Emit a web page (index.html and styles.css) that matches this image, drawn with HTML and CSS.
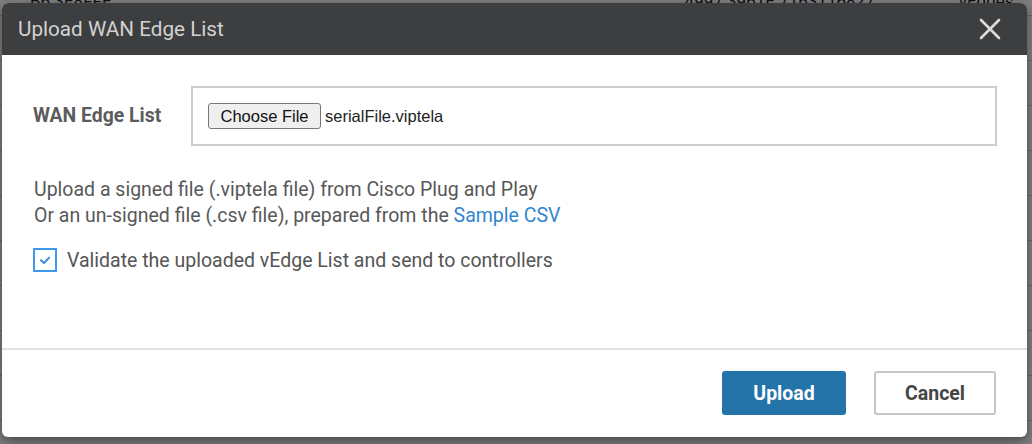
FILE: index.html
```html
<!DOCTYPE html>
<html>
<head>
<meta charset="utf-8">
<link rel="stylesheet" href="styles.css">
</head>
<body>
<div class="page">
  <div class="bg-table">
    <div class="bg-row"><span class="c1">B6 3E8FFE</span><span class="c2">4997 3961E 7163116827</span><span class="c3">vEdges</span></div>
    <div class="bg-row"></div><div class="bg-row"></div><div class="bg-row"></div><div class="bg-row"></div>
    <div class="bg-row"></div><div class="bg-row"></div><div class="bg-row"></div><div class="bg-row"></div>
    <div class="bg-row"></div>
  </div>
  <div class="backdrop"></div>
  <div class="modal">
    <div class="modal-header">
      <span class="title">Upload WAN Edge List</span>
      <svg class="close" width="22" height="22" viewBox="0 0 22 22"><path d="M2 2 L20 20 M20 2 L2 20" stroke="#dcdcdc" stroke-width="2.6" stroke-linecap="round" fill="none"/></svg>
    </div>
    <div class="modal-body">
      <div class="field-row">
        <label class="field-label">WAN Edge List</label>
        <div class="file-box">
          <span class="file-btn">Choose File</span>
          <span class="file-name">serialFile.viptela</span>
        </div>
      </div>
      <p class="desc">Upload a signed file (.viptela file) from Cisco Plug and Play<br>Or an un-signed file (.csv file), prepared from the <a class="link">Sample CSV</a></p>
      <div class="check-row">
        <span class="checkbox"><svg width="14" height="14" viewBox="0 0 14 14"><path d="M3 7.2 L6 10 L11.2 4.6" stroke="#3a8fd8" stroke-width="2" fill="none" stroke-linecap="round" stroke-linejoin="round"/></svg></span>
        <span class="check-label">Validate the uploaded vEdge List and send to controllers</span>
      </div>
    </div>
    <div class="modal-footer">
      <button class="btn btn-primary">Upload</button>
      <button class="btn btn-default">Cancel</button>
    </div>
  </div>
</div>
</body>
</html>
```

FILE: styles.css
```css
* { box-sizing: border-box; }
html, body { margin: 0; padding: 0; }
body { width: 1032px; height: 444px; overflow: hidden; font-family: Roboto, "Liberation Sans", sans-serif; }
.page { position: relative; width: 1032px; height: 444px; background: #fff; overflow: hidden; }
.bg-table { display: flex; flex-direction: column; margin-top: -29px; }
.bg-row { height: 45px; border-bottom: 1px solid #ccc; display: flex; align-items: flex-end; padding-bottom: 4px; font-size: 17px; color: #222; white-space: nowrap; }
.bg-row .c1 { margin-left: 30px; width: 716px; }
.bg-row .c2 { width: 300px; }
.bg-row .c3 { width: 80px; }
.backdrop { position: absolute; inset: 0; background: rgba(0,0,0,0.5); }
.modal { position: absolute; left: 2px; top: 3px; width: 1025px; height: 434px; background: #fff; border-radius: 6px; overflow: hidden; box-shadow: 0 4px 12px rgba(0,0,0,0.45); display: flex; flex-direction: column; }
.modal-header { height: 52px; background: #3d3e40; display: flex; align-items: center; justify-content: space-between; padding: 0 26px 0 16px; flex: none; }
.title { font-size: 20.7px; color: #d2d2d2; }
.close { display: block; }
.modal-body { flex: 1; padding: 31px 30px 0 31px; border-bottom: 2px solid #e2e2e2; }
.field-row { display: flex; align-items: center; }
.field-label { width: 158px; font-size: 19.4px; font-weight: 700; color: #5c5c5c; margin-top: -2px; }
.file-box { flex: 1; height: 60px; border: 2px solid #cdcdcd; display: flex; align-items: center; padding-left: 15px; }
.file-btn { height: 26px; width: 113px; border: 1px solid #777; border-radius: 3px; background: #efefef; font-family: "Liberation Sans", Arial, sans-serif; font-size: 16.5px; color: #111; display: flex; align-items: center; justify-content: center; }
.file-name { margin-left: 4px; font-family: "Liberation Sans", Arial, sans-serif; font-size: 16.5px; color: #222; }
.desc { margin: 31px 0 0 1px; font-size: 19.5px; line-height: 26px; color: #585858; }
.link { color: #2f86cf; }
.check-row { display: flex; align-items: center; margin-top: 19px; }
.checkbox { width: 24px; height: 24px; border: 2px solid #3d98ea; background: #fff; display: flex; align-items: center; justify-content: center; }
.check-label { margin-left: 10px; font-size: 19.5px; color: #555; }
.modal-footer { height: 87px; flex: none; display: flex; justify-content: flex-end; align-items: flex-start; padding: 21px 31px 0 0; gap: 28px; }
.btn { height: 44px; border-radius: 3px; font-family: Roboto, "Liberation Sans", sans-serif; font-size: 19.5px; font-weight: 700; cursor: pointer; }
.btn-primary { width: 124px; background: #2574a9; color: #fff; border: none; }
.btn-default { width: 122px; background: #fff; color: #454545; border: 2px solid #c6c6c6; }
```
